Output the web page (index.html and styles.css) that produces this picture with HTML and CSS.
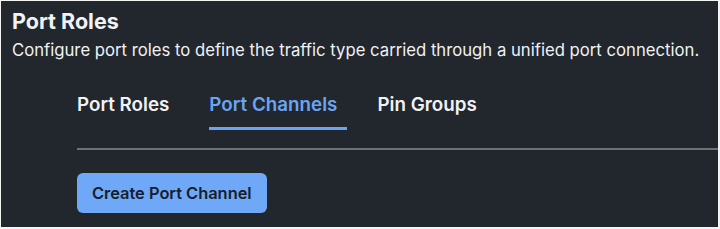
FILE: index.html
```html
<!DOCTYPE html>
<html lang="en">
<head>
    <meta charset="UTF-8">
    <meta name="viewport" content="width=device-width, initial-scale=1.0">
    <title>Port Roles</title>
    <link rel="stylesheet" href="styles.css">
</head>
<body>
    <div class="frame">
        <h1>Port Roles</h1>
        <p class="desc">Configure port roles to define the traffic type carried through a unified port connection.</p>
        <div class="content">
            <div class="tabs">
                <div class="tab">Port Roles</div>
                <div class="tab active">Port Channels</div>
                <div class="tab">Pin Groups</div>
            </div>
            <button class="primary">Create Port Channel</button>
        </div>
    </div>
</body>
</html>
```

FILE: styles.css
```css
* { box-sizing: border-box; }
body { margin: 0; background: #fff; font-family: Inter, "Noto Sans", sans-serif; }
.frame { width: 720px; height: 229px; background: #22262d; border: 1px solid #f4f4f4; border-right-width: 2px; border-bottom-width: 2px; padding: 7px 0 0 11px; color: #f0f2f5; overflow: hidden; }
h1 { margin: 0; font-size: 21.5px; font-weight: 700; line-height: 26px; }
.desc { margin: 5px 0 0; font-size: 16.7px; line-height: 22px; }
.content { padding-left: 65px; margin-top: 29px; }
.tabs { display: flex; gap: 40px; border-bottom: 2px solid #6b717b; height: 60px; }
.tab { font-size: 18.8px; font-weight: 600; line-height: 22px; padding: 4px 0 0; }
.tab.active { color: #6aa5f3; border-bottom: 3px solid #6aa5f3; height: 40px; padding-right: 10px; margin-right: -10px; }
.primary { margin-top: 23px; background: #6ea8f6; color: #16202e; border: none; border-radius: 6px; font-family: inherit; font-size: 16.4px; font-weight: 600; padding: 0 15px; height: 40px; }
```
